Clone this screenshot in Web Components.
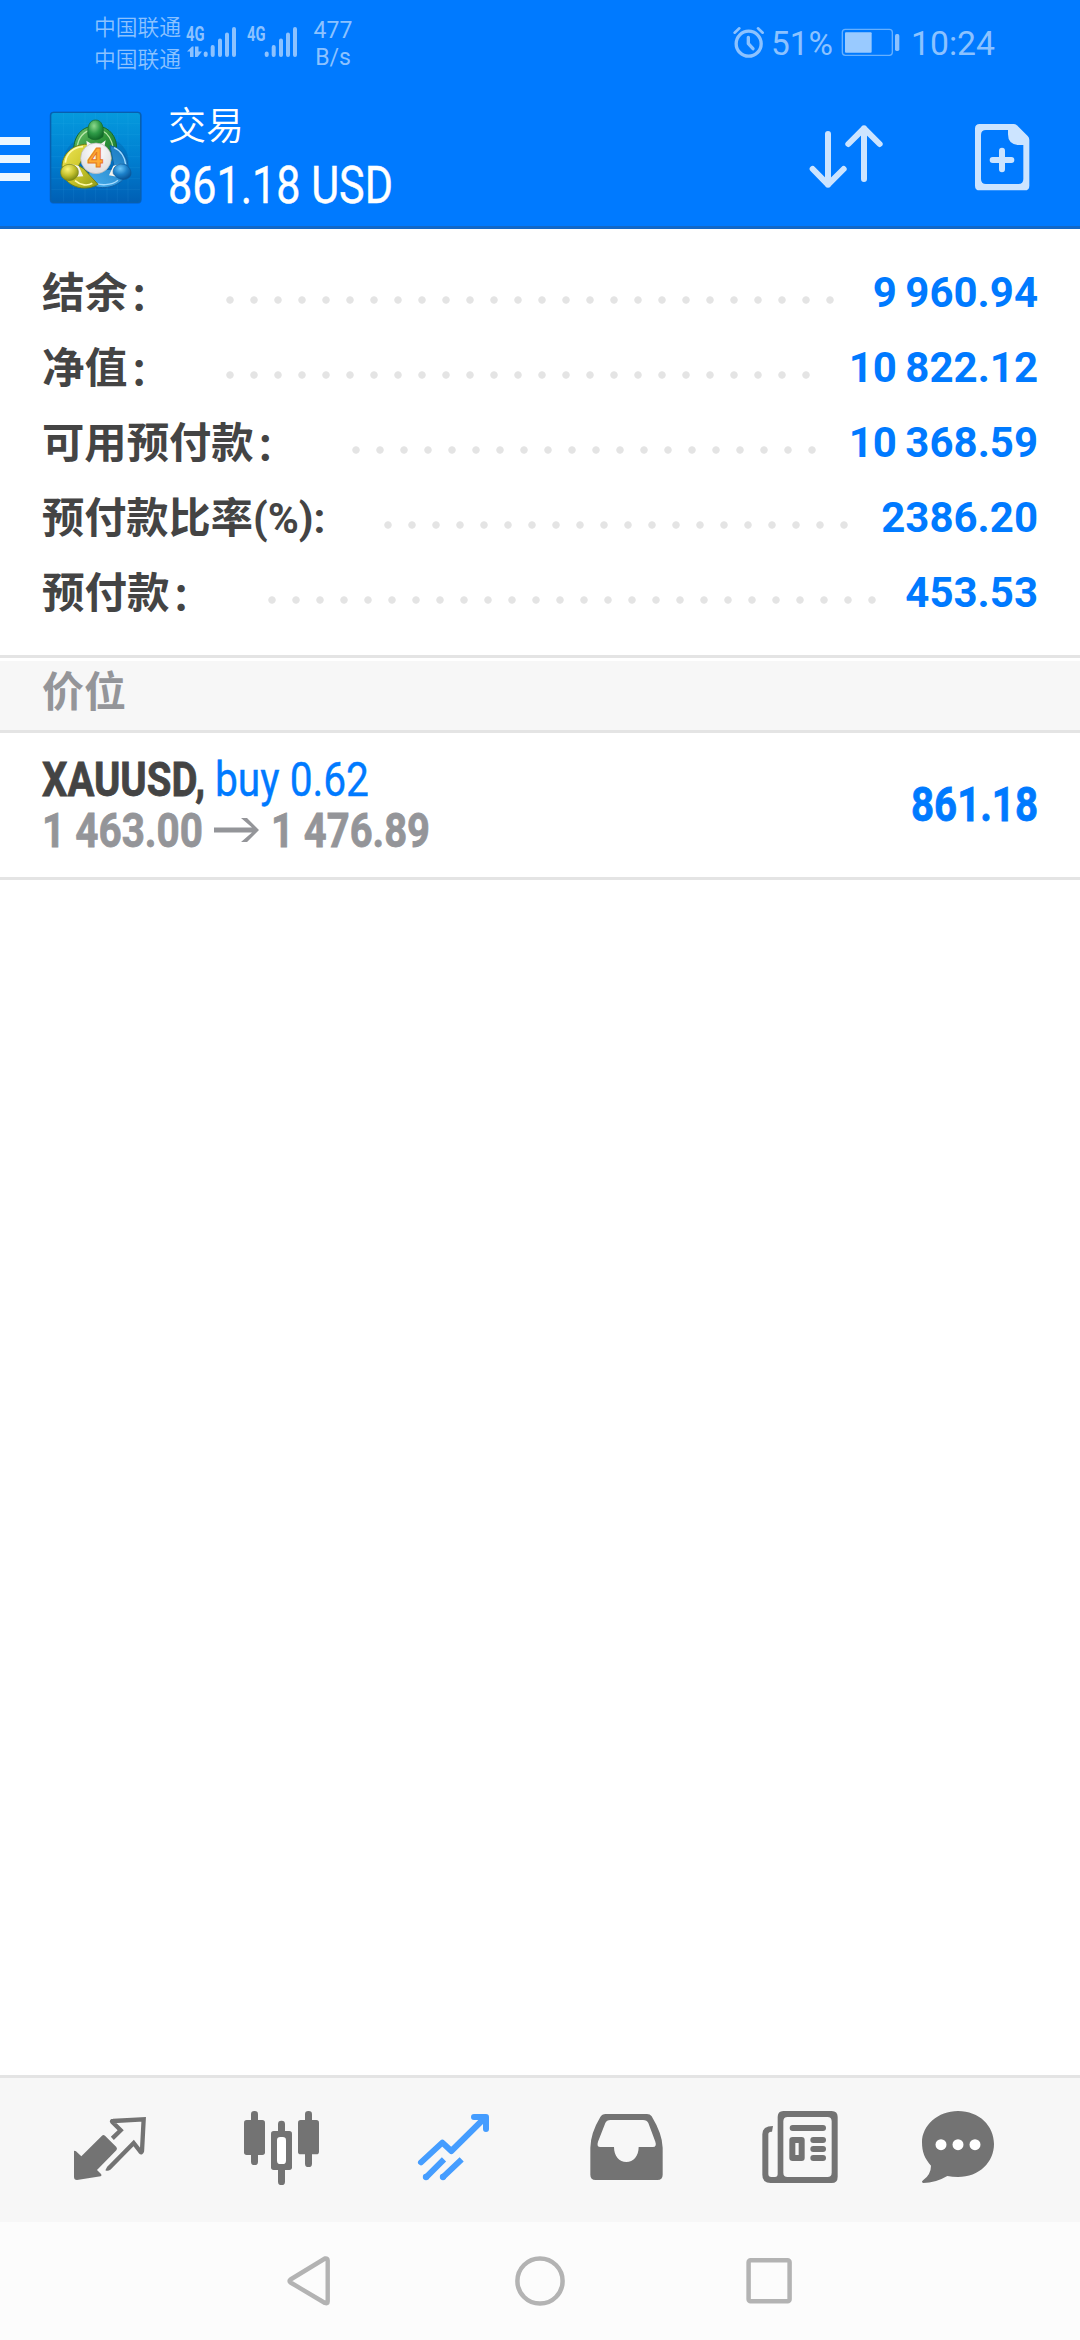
<!DOCTYPE html>
<html lang="zh-CN">
<head>
<meta charset="utf-8">
<title>交易</title>
<style>
html,body{margin:0;padding:0;background:#fff}
body{font-family:Roboto,"Noto Sans CJK SC",sans-serif}
</style>
</head>
<body>
<trade-app></trade-app>
<script>
const define = (name, html, setup) => customElements.define(name, class extends HTMLElement {
  connectedCallback() {
    if (this.shadowRoot) return;
    const root = this.attachShadow({ mode: 'open' });
    root.innerHTML = html;
    if (setup) setup(this, root);
  }
});

/* Text squeezed or stretched horizontally to an exact advance width. */
define('fit-text', `<style>
  :host{display:inline-block;white-space:pre;flex:none}
  span{display:inline-block;transform-origin:0 50%;white-space:pre}
</style><span><slot></slot></span>`, (host, root) => {
  const w = +host.getAttribute('w'), s = root.querySelector('span');
  const natural = s.getBoundingClientRect().width;
  host.style.width = w + 'px';
  if (natural) s.style.transform = `scaleX(${w / natural})`;
});

define('status-bar', `<style>
  :host{display:flex;height:84px;box-sizing:border-box;padding:0 85px 0 94px;color:#8cc2ff;justify-content:space-between}
  .l,.r{display:flex}
  .car{padding-top:12px;font-size:22px;line-height:32px;font-weight:350}
  .car div{height:32px}
  .sig{display:block;margin:20px 0 0 3px}
  .net{padding-top:17px;margin-left:12px;width:42px;text-align:center;font-size:23px;line-height:27px}
  .r{font-size:34px;line-height:86px}
  .a{display:block;margin:22px 5px 0 0}
  .b{display:block;margin:22px 10px 0 8px}
  text{font-family:Roboto,sans-serif;font-weight:700;font-size:20px}
</style>
<div class="l">
  <div class="car"><div><fit-text w="87">中国联通</fit-text></div><div><fit-text w="87">中国联通</fit-text></div></div>
  <svg class="sig" width="116" height="44" viewBox="184 20 116 44" fill="#8cc2ff">
    <text x="186" y="41" textLength="18.5" lengthAdjust="spacingAndGlyphs">4G</text>
    <text x="247" y="41" textLength="18.5" lengthAdjust="spacingAndGlyphs">4G</text>
    <path d="M187 51.5L192 46.500H193.500V57H190V51.500ZM195 46.500H198.500V51.500H202L197.500 57H195Z"/>
    <g stroke="#8cc2ff" stroke-width="4" stroke-linecap="round"><path d="M205.700 53.500V55M212.700 47V55M220 40.500V55M227 34.500V55M234 29V55"/><path d="M266.700 53.500V55M273.700 47V55M281 40.500V55M288 34.500V55M295 29V55"/></g>
  </svg>
  <div class="net">477<br>B/s</div>
</div>
<div class="r">
  <svg class="a" width="34" height="40" viewBox="94 66 102 120" fill="none" stroke="#8cc2ff" stroke-width="10" stroke-linecap="round" stroke-linejoin="round"><circle cx="144" cy="131" r="37.500"/><path d="M143 112V131L157 146"/><path d="M102 98L116 85M186 98L172 85" stroke-width="8"/></svg>
  <fit-text w="62">51%</fit-text>
  <svg class="b" width="60" height="40" viewBox="421 66 180 120"><rect x="425" y="88" width="150" height="78" rx="9" fill="none" stroke="#66b0ff" stroke-width="4"/><rect x="433" y="97" width="80" height="61" rx="3" fill="#99caff"/><rect x="583" y="102" width="13" height="51" rx="5" fill="#8cc2ff"/></svg>
  <fit-text w="84">10:24</fit-text>
</div>`);

define('app-logo', `<style>:host{display:block;width:96px;height:96px}svg{display:block}text{font-family:"Open Sans",Roboto,sans-serif;font-weight:700;font-size:78px}</style>
<svg width="96" height="96" viewBox="24 26 288 288">
  <defs>
    <linearGradient id="bg" x1="0" y1="0" x2="0" y2="1"><stop offset="0" stop-color="#059add"/><stop offset=".5" stop-color="#0080d2"/><stop offset="1" stop-color="#005fb4"/></linearGradient>
    <linearGradient id="g" x1="0" y1="0" x2="1" y2="1"><stop offset="0" stop-color="#72c36c"/><stop offset=".5" stop-color="#2f963b"/><stop offset="1" stop-color="#17702c"/></linearGradient>
    <linearGradient id="y" x1="0" y1="0" x2="1" y2="1"><stop offset="0" stop-color="#f0e65a"/><stop offset=".5" stop-color="#cfc92c"/><stop offset="1" stop-color="#8f9a16"/></linearGradient>
    <linearGradient id="b" x1="1" y1="0" x2="0" y2="1"><stop offset="0" stop-color="#1776bd"/><stop offset="1" stop-color="#49b0ee"/></linearGradient>
    <radialGradient id="gh" cx=".4" cy=".3" r=".7"><stop offset="0" stop-color="#8ed98d"/><stop offset=".55" stop-color="#2e9b47"/><stop offset="1" stop-color="#126b29"/></radialGradient>
    <radialGradient id="yh" cx=".4" cy=".3" r=".7"><stop offset="0" stop-color="#fbf579"/><stop offset=".55" stop-color="#c5c230"/><stop offset="1" stop-color="#7d8a13"/></radialGradient>
    <radialGradient id="bh" cx=".4" cy=".3" r=".7"><stop offset="0" stop-color="#6bc6fa"/><stop offset=".55" stop-color="#1b7fc8"/><stop offset="1" stop-color="#0b5699"/></radialGradient>
    <radialGradient id="w" cx=".5" cy=".3" r=".7"><stop offset="0" stop-color="#fff"/><stop offset="1" stop-color="#dcdcdf"/></radialGradient>
  </defs>
  <rect x="29" y="34" width="276" height="276" rx="12" fill="#004ea8" opacity=".45"/>
  <rect x="32" y="36" width="270" height="270" rx="9" fill="url(#bg)" stroke="#0860ae" stroke-width="4"/>
  <path d="M71 38V304M101 38V304M135 38V304M167 38V304M201 38V304M232 38V304M264 38V304M34 70H300M34 103H300M34 136H300M34 169H300M34 202H300M34 235H300M34 268H300" stroke="#54c6ff" stroke-opacity=".14" stroke-width="2"/>
  <ellipse cx="168" cy="182" rx="98" ry="78" fill="#004a91" opacity=".25"/>
  <path d="M103 166C94 119 120 84 148 80H187C216 88 237 121 228 164L205 190L128 174Z" fill="url(#g)" stroke="#17672d" stroke-width="3"/>
  <path d="M111 153C111 119 126 98 148 90M184 89C205 100 216 119 220 145" fill="none" stroke="#b5e7a8" stroke-width="4"/>
  <path d="M210 136C243 141 266 173 264 204L248 239C220 267 170 269 139 246L150 207L224 207Z" fill="url(#b)" stroke="#1161a7" stroke-width="3"/>
  <path d="M222 142C244 151 255 173 257 192M150 240C178 261 218 254 234 240" fill="none" stroke="#a4dcff" stroke-width="4"/>
  <path d="M151 132C103 128 69 157 66 195L70 229C94 264 139 273 174 252L131 205L116 196Z" fill="url(#y)" stroke="#6f8118" stroke-width="3"/>
  <path d="M76 187C79 158 102 140 129 139M105 241C122 256 144 257 157 249" fill="none" stroke="#fffaa8" stroke-width="5"/>
  <path d="M91 190L116 197L130 228L109 229ZM247 190L220 196L207 225L230 229ZM139 121L156 132H181L197 120L192 144H142Z" fill="#f4f4ef"/>
  <path d="M145 111C139 78 149 59 167 59S194 80 189 109Q167 127 145 111Z" fill="url(#gh)" stroke="#15662a" stroke-width="2"/>
  <path d="M64 227C56 205 73 191 90 192C107 193 119 207 114 223C106 242 77 249 64 227Z" fill="url(#yh)" stroke="#788214" stroke-width="2"/>
  <path d="M220 220C216 203 230 191 246 191C262 191 274 206 273 221C270 240 239 246 220 220Z" fill="url(#bh)" stroke="#0e5799" stroke-width="2"/>
  <circle cx="168" cy="174" r="46" fill="url(#w)" stroke="#b7b7b7" stroke-width="2"/>
  <text x="143" y="201" textLength="46" lengthAdjust="spacingAndGlyphs" fill="#ffab32" stroke="#e5781e" stroke-width="3">4</text>
</svg>`);

define('app-bar', `<style>
  :host{display:flex;height:145px;box-sizing:border-box;border-bottom:3px solid #1268c8;color:#fff;align-items:flex-start}
  .m{display:flex;flex-direction:column;gap:10px;width:30px;margin-top:53px}
  .m i{display:block;height:8px;background:#ebf6ff}
  app-logo{margin:25px 0 0 18px}
  .t{margin:12px 0 0 24px;line-height:60px;flex:1}
  .t div{height:60px}
  .a{font-size:38px;font-weight:350}
  .b{font-size:51px;-webkit-text-stroke:.4px #fff}
  svg{display:block;flex:none}
</style>
<div class="m"><i></i><i></i><i></i></div><app-logo></app-logo>
<div class="t"><div class="a"><fit-text w="76">交易</fit-text></div><div class="b"><fit-text w="225">861.18 USD</fit-text></div></div>
<svg width="80" height="142" viewBox="318 252 240 426" fill="none" stroke="#cce4ff" stroke-width="18" stroke-linecap="round" stroke-linejoin="round"><path d="M384 402V554M338 507L384 554L431 507M492 537V385M445 432L492 385L539 432"/></svg>
<svg width="194" height="142" viewBox="558 252 582 426" fill="#cce4ff"><path fill-rule="evenodd" d="M839 372H942Q948 372 953 378L983 408Q988 413 988 420V557Q988 571 974 571H839Q825 571 825 557V386Q825 372 839 372ZM858 390Q843 390 843 405V537Q843 552 858 552H955Q970 552 970 537V435H953Q924 432 924 403V390Z"/><path d="M906 452V508M878 480H934" stroke="#cce4ff" stroke-width="18" stroke-linecap="round"/></svg>`);

define('summary-row', `<style>
  :host{display:flex;height:75px;line-height:75px;font-size:42px;font-weight:700;color:#444;justify-content:flex-start}
  .n{line-height:77px;height:75px}
  .d{height:75px;margin-left:50px;background:radial-gradient(circle at 12px 45px,#e4e4e4 3.3px,rgba(228,228,228,0) 4.1px) 0 0/24px 75px repeat-x;flex:none}
  .v{margin-left:auto;color:#007aff;word-spacing:-2px}
</style><div class="n"><slot name="label"></slot></div><span class="d"></span><span class="v"><slot></slot></span>`, (host, root) => {
  root.querySelector('.d').style.width = host.getAttribute('dots') * 24 + 'px';
});

define('account-summary', `<style>:host{display:block;padding:26px 42px 25px;border-bottom:3px solid #e4e4e4}i{font-style:normal;font-size:38px;padding-left:2px;vertical-align:-2px;line-height:0}</style>
<summary-row dots="26"><fit-text slot="label" w="126">结余<i>：</i></fit-text>9 960.94</summary-row>
<summary-row dots="25"><fit-text slot="label" w="126">净值<i>：</i></fit-text>10 822.12</summary-row>
<summary-row dots="20"><fit-text slot="label" w="252">可用预付款<i>：</i></fit-text>10 368.59</summary-row>
<summary-row dots="20"><fit-text slot="label" w="283.500">预付款比率(%):</fit-text>2386.20</summary-row>
<summary-row dots="26"><fit-text slot="label" w="168">预付款<i>：</i></fit-text>453.53</summary-row>`);

define('section-title', `<style>:host{display:block;margin-top:3px;height:69px;line-height:63px;padding-left:42px;background:#f7f7f7;border-bottom:3px solid #e4e4e4;color:#949599;font-size:42px;font-weight:700}</style><slot></slot>`);

define('position-row', `<style>
  :host{display:flex;height:144px;padding:0 42px;border-bottom:3px solid #e4e4e4;font-size:48px;line-height:51px;font-weight:700;justify-content:space-between;align-items:center;color:#007aff}
  .x,.y{display:flex;height:51px}
  .x fit-text:first-child{color:#444;margin-right:10px;-webkit-text-stroke:.8px #444}
  .x fit-text:last-child{font-weight:400;-webkit-text-stroke:.4px #007aff}
  .y{color:#949599;-webkit-text-stroke:.8px #949599}
  .p{margin-bottom:2px;-webkit-text-stroke:.8px #007aff}
  svg{display:block;margin:0 11px 0 11px}
</style>
<div><div class="x"><fit-text w="163">XAUUSD,</fit-text><fit-text w="154">buy 0.62</fit-text></div>
<div class="y"><fit-text w="161">1 463.00</fit-text><svg width="46" height="51" viewBox="214 805 46 51"><path d="M214 827.500H252L241 818H247L259 830L247 842H241L252 832.500H214Z" fill="#949599"/></svg><fit-text w="159">1 476.89</fit-text></div></div>
<fit-text class="p" w="127">861.18</fit-text>`);

define('tab-bar', `<style>
  :host{display:flex;height:144px;padding:0 24px;background:#f7f7f7;border-top:3px solid #e4e4e4}
  svg{display:block;width:172px;height:144px;flex:none}
</style>
<svg viewBox="-48 54 516 432"><path d="M102 273Q105 271 108 274L124 289L186 227Q190 223 195 227L229 261Q233 266 229 271L171 330L183 342Q187 346 182 349L111 360Q102 360 102 351Z" fill="#737373"/><path d="M217 235L242 211L217 186Q214 183 219 183L311 178L306 273Q305 279 301 275L281 249L207 324Q203 327 199 325" fill="none" stroke="#737373" stroke-width="13"/></svg>
<svg viewBox="468 54 516 432" fill="#737373"><rect x="612" y="180" width="63" height="105" rx="8"/><rect x="633" y="153" width="21" height="162" rx="10"/><rect x="774" y="180" width="63" height="103" rx="8"/><rect x="795" y="153" width="21" height="168" rx="10"/><rect x="714" y="182" width="21" height="193" rx="10"/><rect x="693" y="213" width="63" height="117" rx="8"/><rect x="711" y="231" width="27" height="81" rx="10" fill="#fff"/></svg>
<svg viewBox="984 54 516 432" fill="none" stroke="#459dff" stroke-width="18" stroke-linejoin="round"><path d="M1143 307L1207 248L1234 273L1334 174" stroke-linecap="round"/><path d="M1302 171H1338V207" stroke-linecap="round"/><path d="M1322 171H1338V190Z" fill="#459dff" stroke-width="8"/><path d="M1158 352L1212 298M1208 352L1265 298"/><g fill="#459dff" stroke="none"><circle cx="1158" cy="351" r="9.500"/><circle cx="1209" cy="351" r="9.500"/></g></svg>
<svg viewBox="-60 54 516 432"><path fill-rule="evenodd" fill="#737373" d="M137 162H261Q270 162 275 169Q307 222 308 263V344Q308 360 292 360H107Q91 360 91 344V263Q92 219 121 171Q126 162 137 162ZM151 180Q140 180 136 189L114 245Q109 261 121 261H162C162 289 178 306 199 306S236 289 236 261H279Q291 260 286 245L265 189Q261 180 249 180Z"/></svg>
<svg viewBox="456 54 516 432"><path fill-rule="evenodd" fill="#737373" d="M670 153H815Q833 153 833 171V350Q833 369 815 369H632Q607 369 607 344V223Q607 198 639 198L636 215Q625 214 625 223V342Q625 351 634 351H645Q653 351 653 342V171Q653 153 670 153ZM683 171Q670 171 670 184V338Q670 351 683 351H802Q815 351 815 338V184Q815 171 802 171Z"/><g fill="#737373"><rect x="689" y="195" width="109" height="18" rx="9"/><rect x="751" y="231" width="47" height="18" rx="9"/><rect x="751" y="258" width="47" height="18" rx="9"/><rect x="751" y="285" width="47" height="18" rx="9"/><path fill-rule="evenodd" d="M698 231H725Q734 231 734 240V294Q734 303 725 303H698Q688 303 688 294V240Q688 231 698 231ZM706 249V285H716V249Z"/></g></svg>
<svg viewBox="972 54 516 432"><path fill="#737373" d="M1194 153C1258 153 1302 198 1302 252S1258 351 1194 351Q1177 351 1162 348Q1126 369 1090 369Q1082 366 1090 360Q1113 343 1113 317C1094 296 1086 276 1086 247C1086 196 1134 153 1194 153Z"/><g fill="#fff"><circle cx="1143" cy="254" r="16.500"/><circle cx="1194" cy="254" r="16.500"/><circle cx="1245" cy="254" r="16.500"/></g></svg>`);

define('system-nav', `<style>:host{display:flex;justify-content:center;height:118px;background:#fcfcfc}svg{display:block;width:230px;height:118px;flex:none}</style>
<svg viewBox="195 2222 230 118" fill="none" stroke="#b3b3b3" stroke-width="4.400" stroke-linejoin="round"><path d="M290.500 2279.500L325 2258.500Q327.700 2258 327.700 2260.500V2301.500Q327.700 2304 325 2303L290.500 2282.500Q288.500 2281 290.500 2279.500Z"/></svg>
<svg viewBox="425 2222 230 118" fill="none" stroke="#b3b3b3" stroke-width="4.500"><circle cx="540" cy="2281" r="22.600"/></svg>
<svg viewBox="655 2222 230 118" fill="none" stroke="#b3b3b3" stroke-width="4.500"><rect x="748.600" y="2260.300" width="41" height="41" rx="2"/></svg>`);

define('trade-app', `<style>
  :host{display:flex;flex-direction:column;width:1080px;height:2340px;overflow:hidden;background:#fff}
  header{background:#007aff}
  main{flex:1}
</style>
<header><status-bar></status-bar><app-bar></app-bar></header>
<main><account-summary></account-summary><section-title>价位</section-title><position-row></position-row></main>
<tab-bar></tab-bar><system-nav></system-nav>`);
</script>
</body>
</html>
